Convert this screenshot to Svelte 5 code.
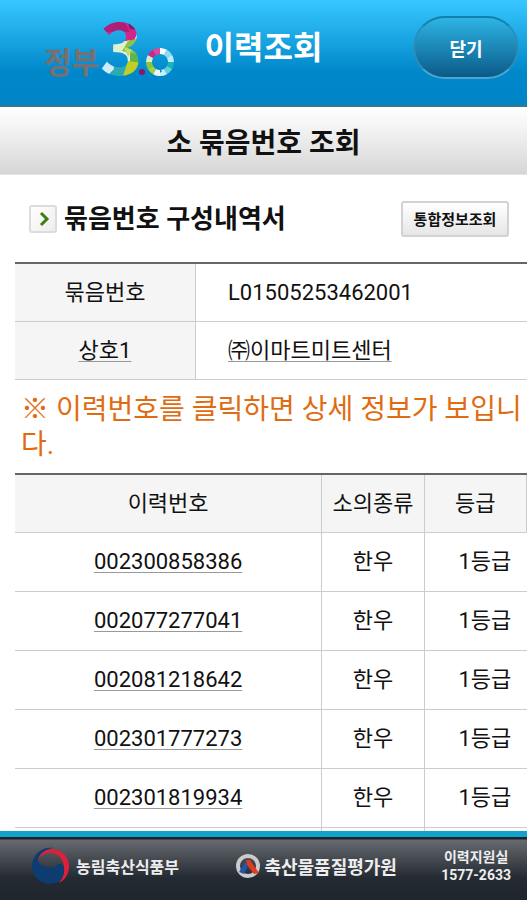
<script lang="ts">
	type Cattle = { id: string; kind: string; grade: string };

	const bundleNo = 'L01505253462001';
	const company = '㈜이마트미트센터';

	const cattle: Cattle[] = [
		{ id: '002300858386', kind: '한우', grade: '1등급' },
		{ id: '002077277041', kind: '한우', grade: '1등급' },
		{ id: '002081218642', kind: '한우', grade: '1등급' },
		{ id: '002301777273', kind: '한우', grade: '1등급' },
		{ id: '002301819934', kind: '한우', grade: '1등급' }
	];

	/* colour bands of the round mark, clockwise from three o'clock */
	const ring = [
		'#19b4b4',
		'#5fd0dc',
		'#c9eef7',
		'#e9f7fb',
		'#a9cf3b',
		'#8cc63f',
		'#d9ecd0',
		'#d3268c',
		'#e0479c',
		'#f7fbfd',
		'#8fdcf2',
		'#bfeaf6'
	];
</script>

<div class="page">
	<header class="top">
		<div class="top__logo">
			<span class="top__gov">정부</span>
			<svg width="76" height="62" viewBox="0 0 76 62" role="img" aria-label="3.0">
				<defs>
					<pattern id="facets" width="76" height="62" patternUnits="userSpaceOnUse">
						<rect width="76" height="62" fill="#d9f1f4" />
						<path d="M0 0H44L34 24H0z" fill="#d3268c" />
						<path d="M0 0H22L30 15H0z" fill="#b01e78" />
						<path d="M26 0H44V14L30 12z" fill="#7c1a66" />
						<path d="M14 27L30 23L26 36L12 38z" fill="#dff0d0" />
						<path d="M28 24L44 20V42L30 36L22 34z" fill="#8cc63f" />
						<path d="M24 30L32 33L28 40z" fill="#c3dd6a" />
						<path d="M30 36L44 38V50L30 46z" fill="#5fb54a" />
						<path d="M28 44L42 46L32 62H20z" fill="#c0cf25" />
						<path d="M12 44H28L22 62H8z" fill="#2ba9b5" />
						<path d="M0 38L12 40L14 52L6 60H0z" fill="#cdebfa" />
					</pattern>
				</defs>
				<text class="top__three" x="0" y="58" fill="url(#facets)">3</text>
				<circle cx="42" cy="55" r="3" fill="#8d1470" />
				<g fill="none" stroke-width="6">
					{#each ring as color, i}
						<circle
							cx="60"
							cy="45"
							r="11"
							stroke={color}
							pathLength="120"
							stroke-dasharray="10 110"
							stroke-dashoffset={-i * 10}
						/>
					{/each}
				</g>
			</svg>
		</div>
		<h1 class="top__title">이력조회</h1>
		<button class="top__close" type="button">닫기</button>
	</header>

	<h2 class="subject">소 묶음번호 조회</h2>

	<main class="content">
		<div class="heading">
			<span class="heading__mark" aria-hidden="true">
				<svg width="24" height="24" viewBox="0 0 24 24">
					<path d="M10 6l6 6l-6 6" fill="none" stroke="#3f7d12" stroke-width="3" />
				</svg>
			</span>
			<h3 class="heading__text">묶음번호 구성내역서</h3>
			<button class="heading__button" type="button">통합정보조회</button>
		</div>

		<table class="table table--info">
			<colgroup>
				<col class="col-label" />
				<col />
			</colgroup>
			<tbody>
				<tr>
					<th scope="row">묶음번호</th>
					<td>{bundleNo}</td>
				</tr>
				<tr>
					<th scope="row"><a href="#company">상호1</a></th>
					<td><a href="#company">{company}</a></td>
				</tr>
			</tbody>
		</table>

		<p class="notice">※ 이력번호를 클릭하면 상세 정보가 보입니다.</p>

		<table class="table table--list">
			<colgroup>
				<col />
				<col class="col-kind" />
				<col class="col-grade" />
			</colgroup>
			<thead>
				<tr>
					<th scope="col">이력번호</th>
					<th scope="col">소의종류</th>
					<th scope="col">등급</th>
				</tr>
			</thead>
			<tbody>
				{#each cattle as row (row.id)}
					<tr>
						<td><a href="#{row.id}">{row.id}</a></td>
						<td>{row.kind}</td>
						<td class="grade">{row.grade}</td>
					</tr>
				{/each}
				<tr class="rest" aria-hidden="true">
					<td></td>
					<td></td>
					<td></td>
				</tr>
			</tbody>
		</table>
	</main>

	<footer class="bottom">
		<div class="bottom__org">
			<svg width="38" height="38" viewBox="0 0 38 38" aria-hidden="true">
				<path
					d="M23 1C12-1 1 7 1 19c0 10 8 18 18 18c4 0 7-1 10-3c3-4 5-8 5-12c-1-5-5-6-8-4c-3 3-6 3-10 2c-5-1-8-3-9-6C8 7 14 2 23 1z"
					fill="#0c3c70"
				/>
				<path
					d="M7 14C8 6 15 2 22 2c9 1 16 8 16 17c0 8-4 14-10 17c4-5 6-10 5-16C32 10 25 5 18 6C13 6 9 9 7 14z"
					fill="#e0203a"
				/>
			</svg>
			<span>농림축산식품부</span>
		</div>
		<div class="bottom__org bottom__org--kape">
			<svg width="26" height="26" viewBox="0 0 26 26" aria-hidden="true">
				<circle cx="13" cy="13" r="10" fill="none" stroke="#c9cbcc" stroke-width="4" />
				<path d="M11 7h4l9 13l-5 1l-7-9z" fill="#e03c22" />
				<path d="M10 9l3 4l-4 8l-5-2z" fill="#2456a6" />
			</svg>
			<span>축산물품질평가원</span>
		</div>
		<div class="bottom__tel">
			<span>이력지원실</span>
			<span>1577-2633</span>
		</div>
	</footer>
</div>

<style>
	:global(body) {
		margin: 0;
		background: #fff;
	}

	.page {
		display: flex;
		flex-direction: column;
		min-height: 100vh;
		color: #111;
		font-family: Roboto, 'Noto Sans CJK KR', sans-serif;
		font-size: 22px;
	}

	h1,
	h2,
	h3,
	p {
		margin: 0;
	}

	button {
		padding: 0;
		font-family: inherit;
		font-weight: 700;
		cursor: pointer;
	}

	a {
		color: inherit;
		text-decoration: underline;
		text-decoration-color: #999;
		text-decoration-thickness: 1px;
		text-underline-offset: 3px;
	}

	.top {
		display: grid;
		grid-template-columns: 1fr auto 1fr;
		align-items: center;
		box-sizing: border-box;
		height: 107px;
		padding: 0 8px 10px;
		border-bottom: 2px solid #3c7590;
		background: linear-gradient(#38c8ff, #0088cb 68%, #0084c6);
	}

	.top__logo {
		display: flex;
		align-items: flex-end;
		gap: 1px;
		margin-left: 36px;
	}

	.top__logo svg {
		flex: none;
		overflow: visible;
	}

	.top__gov {
		color: #786f72;
		font-size: 30px;
		font-weight: 700;
		line-height: 32px;
		white-space: nowrap;
	}

	.top__three {
		font-family: 'Noto Sans CJK KR', sans-serif;
		font-size: 72px;
		font-weight: 700;
	}

	.top__title {
		color: #fff;
		font-size: 32px;
		line-height: 40px;
	}

	.top__close {
		justify-self: end;
		width: 106px;
		height: 63px;
		border: 2px solid;
		border-color: #1180ac #2b8fbd #4aa6d2;
		border-radius: 32px;
		background: linear-gradient(#2db4e4, #0b5a88);
		color: #fff;
		font-size: 18px;
	}

	.subject {
		padding: 18px 0 11px;
		border-bottom: 1px solid #e4e4e4;
		background: linear-gradient(#fff, #f4f4f4 30%, #d6d6d6);
		font-size: 28px;
		line-height: 38px;
		text-align: center;
	}

	.content {
		flex: 1;
		padding-left: 15px;
	}

	.heading {
		display: flex;
		align-items: center;
		height: 87px;
		padding: 0 18px 0 14px;
	}

	.heading__mark {
		display: flex;
		box-sizing: border-box;
		width: 28px;
		height: 28px;
		border: 2px solid #dcdcdc;
		border-radius: 3px;
		background: linear-gradient(135deg, #fff, #ededed);
	}

	.heading__text {
		flex: 1;
		margin-left: 7px;
		font-size: 26px;
		line-height: 36px;
		white-space: nowrap;
	}

	.heading__button {
		width: 108px;
		height: 36px;
		border: 2px solid #d2d2d2;
		border-radius: 3px;
		background: linear-gradient(#fff, #e6e6e6);
		color: #111;
		font-size: 15px;
	}

	.table {
		width: 100%;
		border-collapse: separate;
		border-spacing: 0;
		border-top: 2px solid #666;
		table-layout: fixed;
	}

	.table th,
	.table td {
		box-sizing: border-box;
		height: 58px;
		padding: 0;
		border-right: 1px solid #ccc;
		border-bottom: 1px solid #ccc;
		font-weight: 400;
		line-height: 30px;
		text-align: center;
	}

	.table th {
		background: #f5f5f5;
	}

	.table td:last-child {
		border-right: 0;
	}

	.col-label {
		width: 181px;
	}

	.table--info td {
		padding-left: 32px;
		text-align: left;
	}

	.col-kind,
	.col-grade {
		width: 20%;
	}

	.table--list td {
		height: 59px;
	}

	.table--list .grade {
		padding-left: 18px;
	}

	.table--list .rest td {
		height: 3px;
		border-bottom: 0;
		line-height: 1px;
	}

	.notice {
		padding: 12px 0 11px 6px;
		color: #df6c12;
		font-size: 28px;
		line-height: 35px;
	}

	.bottom {
		display: flex;
		align-items: center;
		justify-content: space-between;
		box-sizing: border-box;
		height: 69px;
		padding: 0 16px 6px 31px;
		border-top: 6px solid #12a0cc;
		background: linear-gradient(#1c2328 2px, #666a70 3px, #242a32 65%, #20262e);
		color: #eee;
		font-weight: 700;
	}

	.bottom__org {
		display: flex;
		align-items: center;
		gap: 7px;
		font-size: 16px;
	}

	.bottom__org--kape {
		gap: 3px;
		margin-left: 12px;
		font-size: 18px;
	}

	.bottom__tel {
		display: flex;
		flex-direction: column;
		align-items: center;
		font-size: 14px;
		line-height: 18px;
	}
</style>
